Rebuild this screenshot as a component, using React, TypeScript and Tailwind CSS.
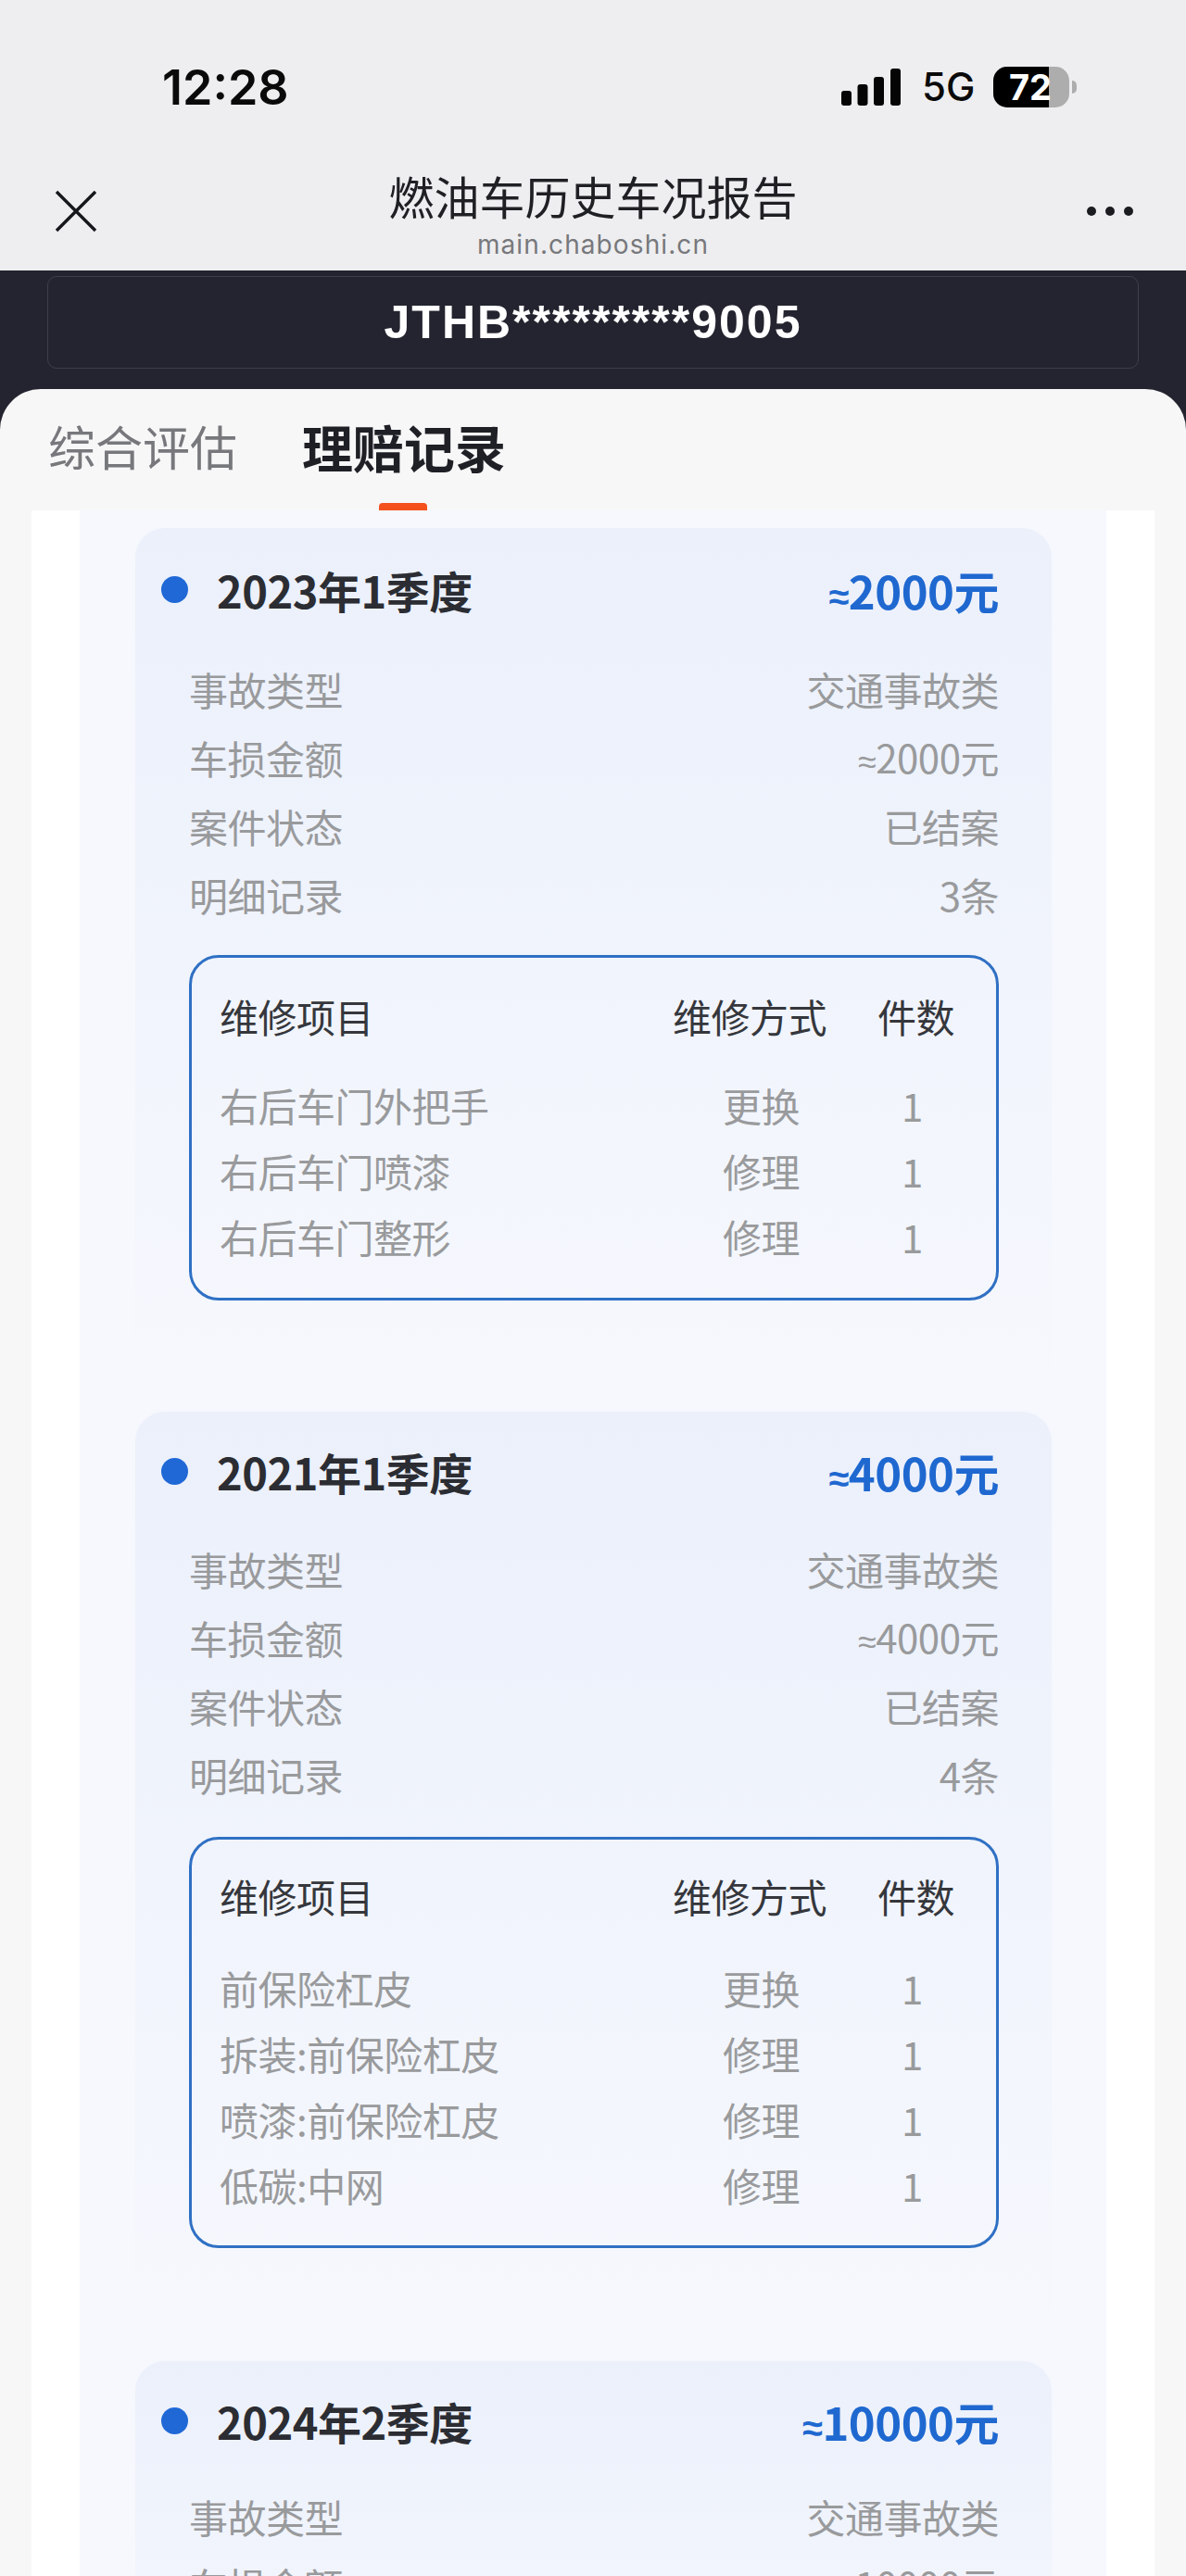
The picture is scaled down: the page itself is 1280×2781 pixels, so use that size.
import React from "react";

const font = { fontFamily: '"Noto Sans CJK SC", sans-serif' };
const latin = { fontFamily: '"Liberation Sans", sans-serif' };

type Claim = {
  title: string;
  amount: string;
  rows: [string, string][];
  items: [string, string][];
  cardPad: string;
  rowsGap: string;
  tableGap: string;
  tablePad: string;
  itemsGap: string;
};

const claims: Claim[] = [
  {
    title: "2023年1季度",
    amount: "2000元",
    rows: [
      ["事故类型", "交通事故类"],
      ["车损金额", "≈2000元"],
      ["案件状态", "已结案"],
      ["明细记录", "3条"],
    ],
    items: [
      ["右后车门外把手", "更换"],
      ["右后车门喷漆", "修理"],
      ["右后车门整形", "修理"],
    ],
    cardPad: "pt-[37px] pb-[120px]",
    rowsGap: "mt-[39px]",
    tableGap: "mt-[29px]",
    tablePad: "pt-[31px] pb-[31px]",
    itemsGap: "mt-[32px]",
  },
  {
    title: "2021年1季度",
    amount: "4000元",
    rows: [
      ["事故类型", "交通事故类"],
      ["车损金额", "≈4000元"],
      ["案件状态", "已结案"],
      ["明细记录", "4条"],
    ],
    items: [
      ["前保险杠皮", "更换"],
      ["拆装:前保险杠皮", "修理"],
      ["喷漆:前保险杠皮", "修理"],
      ["低碳:中网", "修理"],
    ],
    cardPad: "pt-[35px] pb-[122px]",
    rowsGap: "mt-[37px]",
    tableGap: "mt-[31px]",
    tablePad: "pt-[29px] pb-[30px]",
    itemsGap: "mt-[35px]",
  },
  {
    title: "2024年2季度",
    amount: "10000元",
    rows: [
      ["事故类型", "交通事故类"],
      ["车损金额", "≈10000元"],
    ],
    items: [],
    cardPad: "pt-[35px] pb-[120px]",
    rowsGap: "mt-[35px]",
    tableGap: "mt-[29px]",
    tablePad: "pt-[31px] pb-[31px]",
    itemsGap: "mt-[32px]",
  },
];

function Approx({ value }: { value: string }) {
  if (!value.startsWith("≈")) return <span>{value}</span>;
  return (
    <span>
      <span className="text-[36px]" style={latin}>≈</span>
      {value.slice(1)}
    </span>
  );
}

function Card({ claim }: { claim: Claim }) {
  return (
    <section className={`rounded-t-[32px] bg-gradient-to-b from-[#ebf0fb] to-[#f6f8fd] pl-[58px] pr-[57px] ${claim.cardPad}`}>
      <div className="relative flex h-[60px] items-center justify-between">
        <span className="absolute left-[-30px] top-[15px] h-[29px] w-[29px] rounded-full bg-[#1f68d6]" />
        <span className="pl-[30px] text-[47px] font-bold tracking-[-0.5px] text-[#2b2d33]">{claim.title}</span>
        <span className="text-[49px] font-bold tracking-[-0.5px] text-[#1f68d0]">
          <span className="text-[40px]" style={latin}>≈</span>
          {claim.amount}
        </span>
      </div>
      <div className={claim.rowsGap}>
        {claim.rows.map(([label, value]) => (
          <div key={label} className="flex h-[74px] items-center justify-between text-[42px] tracking-[-0.5px] text-[#999a9c]">
            <span>{label}</span>
            <Approx value={value} />
          </div>
        ))}
      </div>
      {claim.items.length > 0 && (
        <div className={`${claim.tableGap} ${claim.tablePad} rounded-[32px] border-[3px] border-[#2f70c4] pl-[30px] text-[42px] tracking-[-0.5px]`}>
          <div className="grid h-[60px] grid-cols-[489px_221px_83px] items-center text-[#35373c]">
            <span>维修项目</span>
            <span>维修方式</span>
            <span>件数</span>
          </div>
          <div className={claim.itemsGap}>
            {claim.items.map(([name, way]) => (
              <div key={name} className="grid h-[71px] grid-cols-[489px_221px_83px] items-center text-[#999a9c]">
                <span>{name}</span>
                <span className="pl-[54px]">{way}</span>
                <span className="pl-[26px]">1</span>
              </div>
            ))}
          </div>
        </div>
      )}
    </section>
  );
}

export default function App() {
  return (
    <div className="h-[2781px] w-[1280px] overflow-hidden bg-[#23242f]" style={font}>
      <header className="relative h-[292px] bg-[#eeeef0]">
        <div className="flex h-[190px] items-start justify-between pl-[175px] pr-[118px] pt-[62px]">
          <span className="text-[52px] font-semibold leading-[66px] text-[#0a0a0a]" style={{ fontFamily: "Inter, sans-serif" }}>
            12:28
          </span>
          <div className="flex items-center pt-[10px]">
            <svg width="64" height="40" viewBox="0 0 64 40" fill="#050505">
              <rect x="0" y="24" width="11" height="16" rx="3" />
              <rect x="17.5" y="17" width="11" height="23" rx="3" />
              <rect x="35" y="9" width="11" height="31" rx="3" />
              <rect x="53" y="0" width="11" height="40" rx="3" />
            </svg>
            <span className="ml-[23px] w-[56px] text-[42px] font-medium leading-[40px] text-[#0a0a0a]" style={{ fontFamily: "Inter, sans-serif" }}>
              5G
            </span>
            <div className="relative ml-[21px] h-[44px] w-[82px] overflow-hidden rounded-[15px] bg-[#adadad]">
              <div className="h-full w-[60px] bg-black" />
              <span className="absolute inset-0 pr-[2px] text-center text-[38px] font-bold leading-[44px] text-white" style={{ fontFamily: "Inter, sans-serif" }}>
                72
              </span>
            </div>
            <span className="ml-[3px] h-[14px] w-[5px] rounded-r-full bg-[#adadad]" />
          </div>
        </div>
        <svg className="absolute left-[58px] top-[204px]" width="48" height="48" viewBox="0 0 48 48" fill="none" stroke="#16171b" strokeWidth="3.4">
          <path d="M3 3 L45 45 M45 3 L3 45" />
        </svg>
        <div className="absolute left-0 right-0 top-[176px] text-center">
          <div className="text-[49px] leading-[70px] text-[#1f2024]">燃油车历史车况报告</div>
          <div className="text-[28px] leading-[36px] tracking-[1.1px] text-[#77787c]" style={{ fontFamily: "Inter, sans-serif" }}>
            main.chaboshi.cn
          </div>
        </div>
        <div className="absolute left-[1173px] top-[223px] flex gap-[10px]">
          <span className="h-[10px] w-[10px] rounded-full bg-[#1b1c20]" />
          <span className="h-[10px] w-[10px] rounded-full bg-[#1b1c20]" />
          <span className="h-[10px] w-[10px] rounded-full bg-[#1b1c20]" />
        </div>
      </header>

      <div className="h-[128px] px-[51px] pt-[6px]">
        <div className="flex h-[100px] items-center justify-center rounded-[10px] border border-[#3e3f4b] text-[50px] font-bold tracking-[2px] text-white" style={latin}>
          JTHB*********9005
        </div>
      </div>

      <main className="h-[2361px] rounded-t-[44px] bg-[#f7f7f8]">
        <nav className="flex h-[131px] items-start pl-[52px]">
          <span className="mt-[21px] text-[51px] leading-[80px] text-[#77787c]">综合评估</span>
          <div className="relative ml-[70px] mt-[21px] h-[110px]">
            <span className="text-[55px] font-bold leading-[80px] text-[#1f2026]">理赔记录</span>
            <span className="absolute bottom-0 left-[83px] h-[8px] w-[52px] rounded-t-[4px] bg-[#f4511e]" />
          </div>
        </nav>
        <div className="mx-[34px] h-[2230px] bg-white px-[52px]">
          <div className="h-full bg-[#f6f8fd] pl-[60px] pr-[59px] pt-[19px]">
            {claims.map((c) => (
              <Card key={c.title} claim={c} />
            ))}
          </div>
        </div>
      </main>
    </div>
  );
}
